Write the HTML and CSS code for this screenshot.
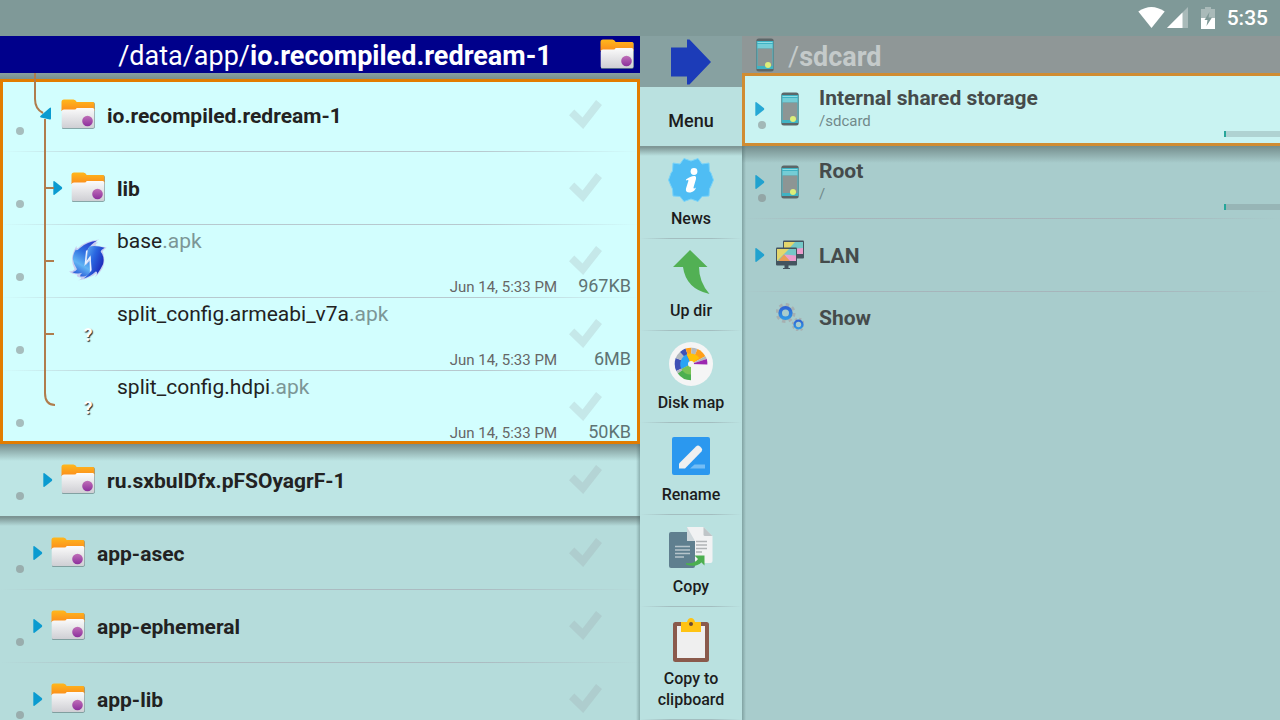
FILE: index.html
```html
<!doctype html>
<html lang="en">

<head>
  <title>File manager</title>
  <meta charset="utf-8">
  <meta name="viewport" content="width=device-width, initial-scale=1.0">
  <link rel="stylesheet" href="styles.css">
</head>

<body>
  <!-- Shared icons -->
  <svg class="defs" width="0" height="0" aria-hidden="true">
    <defs>
      <linearGradient id="orange" x1="0" y1="0" x2="0" y2="1">
        <stop offset="0" stop-color="#ffb81c" />
        <stop offset="1" stop-color="#fb8c1c" />
      </linearGradient>
      <linearGradient id="paper" x1="0" y1="0" x2="0" y2="1">
        <stop offset="0" stop-color="#fbfbfb" />
        <stop offset="1" stop-color="#cfcfd4" />
      </linearGradient>
      <linearGradient id="violet" x1="0" y1="0" x2="0" y2="1">
        <stop offset="0" stop-color="#c070b8" />
        <stop offset="1" stop-color="#8c2f9c" />
      </linearGradient>
      <linearGradient id="swirlA" x1="0.7" y1="0" x2="0.3" y2="1">
        <stop offset="0" stop-color="#2a3fd0" />
        <stop offset="0.35" stop-color="#2f6fe0" />
        <stop offset="0.7" stop-color="#62b4f4" />
        <stop offset="1" stop-color="#2c5ed8" />
      </linearGradient>
      <linearGradient id="swirlB" x1="0" y1="0" x2="1" y2="0.6">
        <stop offset="0" stop-color="#6cc0f6" />
        <stop offset="0.5" stop-color="#2a66e0" />
        <stop offset="1" stop-color="#1a22b4" />
      </linearGradient>
      <linearGradient id="ring" x1="0" y1="0" x2="0" y2="1">
        <stop offset="0" stop-color="#2f66d4" />
        <stop offset="1" stop-color="#2f96e4" />
      </linearGradient>
    </defs>
    <symbol id="folder" viewBox="0 0 34 30">
      <path d="M1 29.500V3.500Q1 1 3.500 1H12.500Q14 1 15.500 3.300H32Q33.800 3.300 33.800 5V28Q33.800 29.800 32 29.800H2Q0.500 29.800 0.500 28Z" fill="#6f8a8c" />
      <path d="M0.500 12V3Q0.500 0.400 3 0.400H12.500Q14.300 0.400 15.700 2.900H32Q33.400 2.900 33.400 4.500V12Z" fill="url(#orange)" />
      <path d="M0.700 13Q0.700 10.600 3 10.600H13.500Q15 10.600 15.700 8.900H31.700Q33.300 8.900 33.300 10.500V27.500Q33.300 29 31.800 29H2.200Q0.700 29 0.700 27.500Z" fill="url(#paper)" />
      <circle cx="26.500" cy="22" r="5.300" fill="url(#violet)" />
    </symbol>
    <symbol id="arrow" viewBox="0 0 10 16">
      <path d="M1.500 1.300Q0.300 0.500 0.300 2V14Q0.300 15.500 1.500 14.700L8.800 8.900Q9.700 8 8.800 7.100Z" fill="#0a9bd0" />
    </symbol>
    <symbol id="phone" viewBox="0 0 18 34">
      <rect x="0.300" y="0.500" width="17.400" height="33" rx="2.500" fill="#5c6668" />
      <rect x="0.600" y="3" width="16.800" height="28" fill="#3fb3c4" />
      <rect x="1.500" y="4" width="15" height="1" fill="#8fdde4" />
      <rect x="1.500" y="6" width="15" height="4.500" fill="#75cdd6" />
      <rect x="1.500" y="10.500" width="15" height="17.500" fill="#8d9594" />
      <circle cx="12" cy="27" r="3" fill="#dcee7a" />
    </symbol>
  </svg>

  <div class="status">
    <svg width="27" height="22" viewBox="0 0 27 22"><path d="M0.300 4.500Q13.300 -4.500 26.700 4.500L13.500 21Z" fill="#fff" /></svg>
    <svg class="signal" width="21" height="22" viewBox="0 0 21 22">
      <path d="M21 0V21H0Z" fill="#a9bab9" />
      <path d="M15.500 5.500V21H0Z" fill="#fff" />
    </svg>
    <svg class="battery" width="14" height="22" viewBox="0 0 14 22">
      <path d="M4 0H10V2H14V11H0V2H4Z" fill="#a9bab9" />
      <path d="M0 11H14V22H0Z" fill="#fff" />
      <path d="M8.500 5L3.500 13H6.500L5.500 19L11 10.500H7.500Z" fill="#7f9997" />
    </svg>
    <time>5:35</time>
  </div>

  <div id="container">
    <!-- Active pane -->
    <section class="pane">
      <header class="title">
        <h1>/data/app/<b>io.recompiled.redream-1</b></h1>
        <svg width="34" height="30"><use href="#folder" /></svg>
      </header>
      <div class="list">
        <ul class="group">
          <li class="row level1">
            <i class="dot"></i>
            <button class="expand" aria-label="Collapse"><svg class="open" width="12" height="16" viewBox="0 0 12 16"><path d="M8 1.300V11.500Q8 12.700 6.800 12.400L-2.200 10.500Q-3.700 10 -2.400 8.700L6.600 1Q8 0 8 1.300Z" fill="#0a9bd0" /></svg></button>
            <svg class="icon" width="34" height="30"><use href="#folder" /></svg>
            <div class="name dir">io.recompiled.redream-1</div>
            <input type="checkbox" class="tick" aria-label="io.recompiled.redream-1">
          </li>
          <li class="row level2">
            <i class="dot"></i>
            <button class="expand" aria-label="Expand"><svg width="10" height="16"><use href="#arrow" /></svg></button>
            <svg class="icon" width="34" height="30"><use href="#folder" /></svg>
            <div class="name dir">lib</div>
            <input type="checkbox" class="tick" aria-label="lib">
          </li>
          <li class="row level2">
            <i class="dot"></i>
            <span class="expand"></span>
            <svg class="icon" width="34" height="42" viewBox="6 0 102 125" overflow="visible">
              <path d="M91 1Q70 11 88 11Q72 17 86 20L113 25Q105 31 101 36Q109 60 104 78Q101 92 78 114Q84 103 82 102Q70 112 68 111Q48 122 26 124Q42 117 34 115Q18 112 26 106Q10 106 0 97Q12 97 17 90Q8 72 9 55Q13 36 22 20Q22 30 28 26Q48 5 91 1Z" fill="#c9cdf0" />
              <path d="M84 5Q56 7 32 27Q22 38 21 30Q10 48 12 62Q14 76 24 90Q19 98 10 99Q24 106 40 101Q32 107 34 112Q54 113 62 102L65 62L50 78L53 36Q66 14 84 5Z" fill="url(#swirlA)" />
              <path d="M61 22Q80 17 107 26Q96 32 95 38Q108 54 102 75Q95 90 84 106Q86 96 80 97Q62 114 44 118Q62 104 68 92L65 52L53 68L56 34Q58 26 61 22Z" fill="url(#swirlB)" />
              <path d="M53 34L49 74L63 54L65 96" fill="none" stroke="#e8f2ff" stroke-width="4" />
            </svg>
            <div class="file">
              <div class="name">base<span>.apk</span></div>
              <div class="meta"><time>Jun 14, 5:33 PM</time><span>967KB</span></div>
            </div>
            <input type="checkbox" class="tick" aria-label="base.apk">
          </li>
          <li class="row level2">
            <i class="dot"></i>
            <span class="expand"></span>
            <span class="icon unknown">?</span>
            <div class="file">
              <div class="name">split_config.armeabi_v7a<span>.apk</span></div>
              <div class="meta"><time>Jun 14, 5:33 PM</time><span>6MB</span></div>
            </div>
            <input type="checkbox" class="tick" aria-label="split_config.armeabi_v7a.apk">
          </li>
          <li class="row level2">
            <i class="dot"></i>
            <span class="expand"></span>
            <span class="icon unknown">?</span>
            <div class="file">
              <div class="name">split_config.hdpi<span>.apk</span></div>
              <div class="meta"><time>Jun 14, 5:33 PM</time><span>50KB</span></div>
            </div>
            <input type="checkbox" class="tick" aria-label="split_config.hdpi.apk">
          </li>
        </ul>
        <!-- Branch lines of the tree -->
        <svg class="tree" width="60" height="340" viewBox="0 0 60 340">
          <path d="M35 0V26Q35 36 43 40M45 46V320Q45 332 55 332M45 115H54M45 188H54M45 261H54" fill="none" stroke="#b07c4c" stroke-width="2" />
        </svg>
        <ul class="siblings">
          <li class="row level1">
            <i class="dot"></i>
            <button class="expand" aria-label="Expand"><svg width="10" height="16"><use href="#arrow" /></svg></button>
            <svg class="icon" width="34" height="30"><use href="#folder" /></svg>
            <div class="name dir">ru.sxbuIDfx.pFSOyagrF-1</div>
            <input type="checkbox" class="tick" aria-label="ru.sxbuIDfx.pFSOyagrF-1">
          </li>
        </ul>
        <ul class="parents">
          <li class="row">
            <i class="dot"></i>
            <button class="expand" aria-label="Expand"><svg width="10" height="16"><use href="#arrow" /></svg></button>
            <svg class="icon" width="34" height="30"><use href="#folder" /></svg>
            <div class="name dir">app-asec</div>
            <input type="checkbox" class="tick" aria-label="app-asec">
          </li>
          <li class="row">
            <i class="dot"></i>
            <button class="expand" aria-label="Expand"><svg width="10" height="16"><use href="#arrow" /></svg></button>
            <svg class="icon" width="34" height="30"><use href="#folder" /></svg>
            <div class="name dir">app-ephemeral</div>
            <input type="checkbox" class="tick" aria-label="app-ephemeral">
          </li>
          <li class="row">
            <i class="dot"></i>
            <button class="expand" aria-label="Expand"><svg width="10" height="16"><use href="#arrow" /></svg></button>
            <svg class="icon" width="34" height="30"><use href="#folder" /></svg>
            <div class="name dir">app-lib</div>
            <input type="checkbox" class="tick" aria-label="app-lib">
          </li>
        </ul>
      </div>
    </section>

    <!-- Tool bar between the panes -->
    <nav class="tools">
      <button class="switch" aria-label="Switch pane">
        <svg width="40" height="46" viewBox="0 0 40 46"><path d="M0 8.500H16V0.500H18.500L40 23L18.500 45.500H16V37.500H0Z" fill="#1c3cb8" /></svg>
      </button>
      <button class="menu">Menu</button>
      <div class="items">
        <button class="tool">
          <svg width="46" height="44" viewBox="0 0 46 44">
            <path d="M23 3L30 0.500L34 6L41 5L41.500 13L43 15L45.500 22L43 28L41.500 31L41 38L34 38.500L30 43.500L23 41L16 43.500L12 38.500L5 38L4.500 31L3 28L0.500 22L3 15L4.500 13L5 5L12 6L16 0.500Z" fill="#4fbdf4" stroke="#7bd4f8" />
            <circle cx="26" cy="13.500" r="3.400" fill="#fff" />
            <path d="M18 21.500Q23 17.500 27 18Q28.500 18.500 28 21L25.500 29.500Q25.300 31.500 28 29.500Q27 33.500 22.500 34.500Q17 35 18 30.500L20.500 22.500Q20 21.500 18 22.500Z" fill="#fff" />
          </svg>
          News
        </button>
        <button class="tool">
          <svg width="46" height="44" viewBox="0 0 46 44"><path d="M22 0L39.500 17H31Q31 32 41.500 44Q18 39 15 17H5Z" fill="#52b054" /></svg>
          Up dir
        </button>
        <button class="tool">
          <svg width="46" height="44" viewBox="0 0 46 44">
            <circle cx="23" cy="22" r="22" fill="#f5f5f5" />
            <!-- outer ring -->
            <path d="M23 22L6.700 22A16.300 16.300 0 0 1 7.700 16Z" fill="#3f51b5" />
            <path d="M23 22L8.300 29A16.300 16.300 0 0 1 6.700 22Z" fill="#3f51b5" />
            <path d="M23 22L7.700 16A16.300 16.300 0 0 1 12 10Z" fill="#b4b9be" />
            <path d="M23 22L12 10A16.300 16.300 0 0 1 17.500 6.600Z" fill="#3f51b5" />
            <path d="M23 22L17.500 6.600A16.300 16.300 0 0 1 23.500 5.700Z" fill="#ff9f1a" />
            <path d="M23 22L23.500 5.700A16.300 16.300 0 0 1 29.500 7Z" fill="#b4b9be" />
            <path d="M23 22L29.500 7A16.300 16.300 0 0 1 37.300 14.200Z" fill="#ff9f1a" />
            <path d="M23 22L37.300 14.200A16.300 16.300 0 0 1 38.800 17Z" fill="#b4b9be" />
            <path d="M23 22L38.800 17A16.300 16.300 0 0 1 39.300 22.500Z" fill="#9c27b0" />
            <path d="M23 22L9.800 31.500A16.300 16.300 0 0 1 8.300 29Z" fill="#b4b9be" />
            <path d="M23 22V38.300A16.300 16.300 0 0 1 9.800 31.500Z" fill="#4caf50" />
            <!-- inner ring -->
            <path d="M23 22L13.500 27A10.500 10.500 0 0 1 18.500 12.500Z" fill="#29a3f4" />
            <path d="M23 22L18.500 12.500A10.500 10.500 0 0 1 31.500 16Z" fill="#ffc107" />
            <path d="M23 22V32.500A10.500 10.500 0 0 1 13.500 27Z" fill="#79c255" />
            <circle cx="23" cy="22" r="3" fill="#f5f5f5" />
          </svg>
          Disk map
        </button>
        <button class="tool">
          <svg width="46" height="44" viewBox="0 0 46 44">
            <rect x="4" y="3" width="38" height="38" rx="2" fill="#2b98ef" />
            <path d="M22 34.500L26.500 30.500H37V34.500Z" fill="#74bdf5" />
            <path d="M11 34.500V29.500L28 12.500Q30 10.500 32 12.500L33.500 14Q35 15.500 33.500 17.500L17 34.500Z" fill="#f0f0f0" />
          </svg>
          Rename
        </button>
        <button class="tool">
          <svg width="46" height="44" viewBox="0 0 46 44">
            <rect x="1" y="6" width="26" height="36" rx="2" fill="#5f7f8f" />
            <path d="M19 1H35.500L44.500 10V35Q44.500 37 42.500 37H27V15H19Z" fill="#f1f2f3" />
            <path d="M35.500 1L44.500 10H37Q35.500 10 35.500 8.500Z" fill="#bfc5c8" />
            <path d="M19 1V15H27Z" fill="#cfd8dc" />
            <path d="M7 20.500H22M7 24H22M7 27.500H22M7 31H16" stroke="#b6c5cc" stroke-width="1.400" />
            <path d="M28 15.500H39M28 19H39M28 22.500H39M28 26H34" stroke="#b0b4b6" stroke-width="1.400" />
            <path d="M18 37Q27 38 30 33L26.500 29.500H36.500V39.500L33.500 36.500Q27 42 18 38.500Z" fill="#4caf50" />
          </svg>
          Copy
        </button>
        <button class="tool">
          <svg width="46" height="44" viewBox="0 0 46 44">
            <rect x="5" y="4" width="36" height="40" rx="2.500" fill="#8a5a4c" />
            <rect x="9" y="8" width="28" height="32" fill="#efefef" />
            <path d="M13 4H19Q20 0 23 0T27 4H33V14H13Z" fill="#ffc313" />
            <circle cx="23" cy="6" r="2" fill="#6b4a35" />
          </svg>
          Copy to clipboard
        </button>
      </div>
    </nav>

    <!-- Inactive pane -->
    <section class="pane other">
      <header class="title">
        <svg width="18" height="34"><use href="#phone" /></svg>
        <h2>/<b>sdcard</b></h2>
      </header>
      <div class="list">
        <ul class="group">
          <li class="row">
            <div class="side">
              <button class="expand" aria-label="Expand"><svg width="10" height="16"><use href="#arrow" /></svg></button>
              <i class="dot"></i>
            </div>
            <svg class="icon" width="18" height="34"><use href="#phone" /></svg>
            <div class="volume">
              <div class="name dir">Internal shared storage</div>
              <div class="path">/sdcard</div>
            </div>
            <div class="usage"><div style="width: 4%"></div></div>
          </li>
        </ul>
        <ul class="volumes">
          <li class="row">
            <div class="side">
              <button class="expand" aria-label="Expand"><svg width="10" height="16"><use href="#arrow" /></svg></button>
              <i class="dot"></i>
            </div>
            <svg class="icon" width="18" height="34"><use href="#phone" /></svg>
            <div class="volume">
              <div class="name dir">Root</div>
              <div class="path">/</div>
            </div>
            <div class="usage"><div style="width: 4%"></div></div>
          </li>
          <li class="row">
            <div class="side">
              <button class="expand" aria-label="Expand"><svg width="10" height="16"><use href="#arrow" /></svg></button>
            </div>
            <svg class="icon" width="28" height="30" viewBox="0 0 28 30">
              <rect x="7" y="0.500" width="21" height="18" rx="1" fill="#44545f" />
              <path d="M8 2H27V14H8Z" fill="#74c8c8" />
              <path d="M8 2H19L8 14Z" fill="#e4d66c" />
              <path d="M16 9L27 8V14H16Z" fill="#ea9ccc" />
              <rect x="0" y="7.500" width="21" height="18" rx="1" fill="#44545f" />
              <path d="M1 9H20V21H1Z" fill="#74c8c8" />
              <path d="M1 9H13L1 21Z" fill="#e4d66c" />
              <path d="M8 14.500L20 15.500V21H13Z" fill="#ea9ccc" />
              <path d="M2 21L8 14.500L14 21Z" fill="#eb9c54" />
              <path d="M8.500 25H12.500V28H14V29H7V28H8.500Z" fill="#44545f" />
            </svg>
            <div class="name dir">LAN</div>
          </li>
          <li class="row last">
            <div class="side"></div>
            <svg class="icon" width="28" height="28" viewBox="0 0 28 28">
              <circle cx="9.500" cy="10" r="8.500" fill="none" stroke="#a7b0b1" stroke-width="3" stroke-dasharray="3.400 3.280" />
              <circle cx="9.500" cy="10" r="7.500" fill="#a7b4b6" />
              <circle cx="9.500" cy="10" r="5.300" fill="#a8cccc" stroke="url(#ring)" stroke-width="3.600" />
              <circle cx="22.500" cy="21.500" r="5.800" fill="none" stroke="#a7b0b1" stroke-width="2" stroke-dasharray="2.300 2.250" />
              <circle cx="22.500" cy="21.500" r="3.900" fill="#a8cccc" stroke="url(#ring)" stroke-width="2.400" />
            </svg>
            <div class="name dir">Show</div>
          </li>
        </ul>
      </div>
    </section>
  </div>
</body>

</html>
```

FILE: styles.css
```css
* {
  box-sizing: border-box;
}

body {
  margin: 0;
  height: 100vh;
  display: flex;
  flex-direction: column;
  background-color: #b5dcdb;
  color: #222;
  font-family: Roboto, "Liberation Sans", sans-serif;
  font-size: 21px;
  overflow: hidden;
  user-select: none;
}

ul {
  list-style: none;
  margin: 0;
  padding: 0;
}

button {
  border: 0;
  padding: 0;
  background: none;
  color: inherit;
  font-family: inherit;
}

svg {
  display: block;
  flex: none;
}

.defs {
  position: absolute;
}

/* Status bar */
.status {
  flex: none;
  height: 36px;
  display: flex;
  align-items: center;
  justify-content: flex-end;
  padding-right: 12px;
  background-color: #7f9998;
  color: white;
  font-size: 21px;
  font-weight: 500;
}

.status .signal {
  margin-left: 2px;
}

.status .battery {
  margin: 0 12px 0 13px;
}

#container {
  flex: 1;
  min-height: 0;
  display: flex;
}

/* Panes */
.pane {
  flex: 0 0 50%;
  min-width: 0;
  display: flex;
  flex-direction: column;
}

.title {
  flex: none;
  height: 37px;
  display: flex;
  align-items: center;
  padding: 0 6px 2px 70px;
  background-color: #00008b;
  color: white;
}

.title h1,
.title h2 {
  flex: 1;
  margin: 0;
  padding-top: 4px;
  font-size: 27px;
  line-height: 32px;
  font-weight: 400;
  text-align: center;
  white-space: nowrap;
}

.list {
  position: relative;
  flex: 1;
  min-height: 0;
  padding-top: 6px;
  background: linear-gradient(#889f9e, #77908f) top / 100% 6px no-repeat;
}

.list::after {
  content: "";
  position: absolute;
  top: 371px;
  right: 0;
  bottom: 0;
  width: 4px;
  background: linear-gradient(to right, transparent, rgba(70, 100, 100, 0.4));
}

.group {
  background-color: #d2fefe;
  outline: 3px solid #e27c00;
  outline-offset: -3px;
}

.siblings {
  background: linear-gradient(#758d8c, #bde5e4 17px);
}

.parents {
  border-top: 1px solid #7c9392;
  margin-top: -1px;
  background: linear-gradient(#7a9291, #b5dcdb 9px);
}

.row {
  position: relative;
  height: 73px;
  display: flex;
  align-items: center;
  padding-left: 16px;
  background: linear-gradient(to right, transparent, rgba(165, 165, 175, 0.6) 20%, rgba(165, 165, 175, 0.6) 75%, transparent) bottom / 100% 1px no-repeat;
}

.group .row:last-child,
.siblings .row {
  background: none;
}

.dot {
  width: 8px;
  height: 8px;
  margin-top: 30px;
  border-radius: 50%;
  background-color: rgba(130, 135, 135, 0.55);
}

.expand {
  width: 10px;
  margin: 0 0 1px 9px;
}

.level1 .expand {
  margin-left: 19px;
}

.level2 .expand {
  margin-left: 29px;
}

.expand .open {
  overflow: visible;
}

.icon {
  margin: 0 12px 3px 8px;
}

.unknown {
  flex: none;
  width: 34px;
  margin-bottom: 0;
  color: white;
  font-size: 18px;
  line-height: 20px;
  font-weight: 700;
  text-align: center;
  text-shadow: 1px 1px 1px #222;
}

.name {
  line-height: 26px;
  white-space: nowrap;
}

.dir {
  padding-top: 1px;
  font-weight: 700;
}

.name span {
  color: #7c9696;
}

.file {
  flex: 1;
  align-self: stretch;
  display: flex;
  flex-direction: column;
  justify-content: space-between;
  padding: 3px 9px 0 0;
}

.meta {
  display: flex;
  justify-content: flex-end;
  align-items: baseline;
  color: #5f7474;
  font-size: 18px;
  line-height: 22px;
}

.meta time {
  color: #666;
  font-size: 15px;
}

.meta span {
  width: 74px;
  text-align: right;
}

.tick {
  appearance: none;
  position: absolute;
  top: 21px;
  right: 38px;
  width: 33px;
  height: 29px;
  margin: 0;
  background-color: rgba(150, 155, 160, 0.22);
  clip-path: polygon(0 53%, 16% 33%, 41% 60%, 82% 0, 100% 17%, 43% 100%);
}

.tree {
  position: absolute;
  top: 0;
  left: 0;
}

/* Tool bar */
.tools {
  flex: 0 0 102px;
  display: flex;
  flex-direction: column;
  background-color: #bae1e0;
  color: #1c1c1c;
}

.switch {
  flex: none;
  height: 51px;
  padding-left: 31px;
  background-color: #87a1a1;
}

.menu {
  flex: none;
  height: 60px;
  padding-top: 8px;
  border-bottom: 1px solid #7f9796;
  font-size: 18px;
  font-weight: 500;
}

.items {
  background: linear-gradient(#7d9594, #bae1e0 9px);
}

.tool {
  display: flex;
  flex-direction: column;
  align-items: center;
  gap: 6px;
  width: 100%;
  padding: 11px 12px 10px;
  background: linear-gradient(to right, transparent, #a3bdbf 30%, #a3bdbf 70%, transparent) bottom / 100% 1px no-repeat;
  font-size: 16px;
  line-height: 21px;
  font-weight: 500;
}

/* Inactive pane */
.other {
  flex: 1;
  background-color: #a8cccc;
  color: #454b4b;
  overflow: hidden;
}

.other .title {
  padding: 0 0 0 14px;
  background-color: #8f9797;
  color: #c4caca;
}

.other .title h2 {
  margin-left: 14px;
  text-align: left;
}

.other .list {
  padding-top: 0;
  background: none;
}

.other .list::after {
  top: 73px;
  right: auto;
  left: 0;
  background: linear-gradient(to left, transparent, rgba(70, 100, 100, 0.4));
}

.other .group {
  margin-right: -3px;
  background-color: #c9f3f2;
  outline-color: #d08c32;
}

.volumes {
  background: linear-gradient(#748d8c, #a8cccc 17px) top / 100% 17px no-repeat;
}

.other .row {
  padding-left: 13px;
}

.other .last {
  height: 50px;
  background: none;
}

.side {
  position: relative;
  width: 17px;
  padding-bottom: 2px;
}

.side .expand {
  display: block;
  margin: 0;
  opacity: 0.85;
}

.side .dot {
  position: absolute;
  top: 20px;
  left: 3px;
  margin: 0;
}

.other .icon {
  width: 28px;
  margin: 0 15px 1px 4px;
}

.volume {
  padding-bottom: 4px;
}

.path {
  color: #71898a;
  font-size: 15px;
  line-height: 20px;
}

.usage {
  position: absolute;
  right: 0;
  bottom: 9px;
  width: 56px;
  height: 6px;
  background-color: rgba(100, 110, 115, 0.25);
}

.group .usage {
  width: 59px;
}

.usage div {
  height: 100%;
  background-color: #26a69a;
}
```
